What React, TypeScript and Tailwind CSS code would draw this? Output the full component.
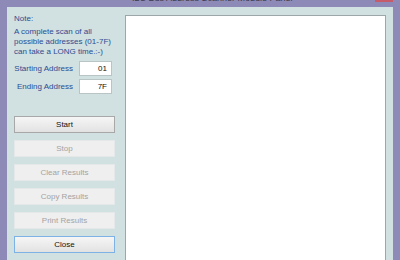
const font = { fontFamily: '"Liberation Sans", Arial, sans-serif' };

function ActionButton({ label, disabled, focused }: { label: string; disabled?: boolean; focused?: boolean }) {
  if (disabled) {
    return (
      <div className="w-[101px] h-[17px] flex items-center justify-center border border-[#E4E8E8] bg-[#EFEFEF] text-[8px] text-[#A3A3A3]">
        {label}
      </div>
    );
  }
  return (
    <div
      className={`w-[101px] h-[17px] flex items-center justify-center border bg-gradient-to-b from-[#F6F6F6] to-[#E2E2E2] text-[8px] text-[#111]  ${
        focused ? "border-[#7DB2E6]" : "border-[#A8A8A8]"
      }`}
    >
      {label}
    </div>
  );
}

export default function App() {
  return (
    <div className="w-[400px] h-[260px] overflow-hidden bg-[#8D8AB7] flex flex-col" style={font}>
      {/* Title bar (mostly cut off) */}
      <div className="h-[7px] flex overflow-hidden shrink-0">
        <div className="pl-[132px] -mt-[7px] text-[9px] leading-[10px] text-[#3A3A4A] whitespace-nowrap">
          I2C Bus Address Scanner Module Panel
        </div>
        <div className="ml-auto mr-[7px] w-[18px] h-[2px] bg-[#C65B6A]" />
      </div>

      {/* Window body */}
      <div className="flex-1 mx-[7px] bg-[#D1E0E0] flex min-h-0">
        {/* Left controls */}
        <div className="w-[118px] shrink-0 pl-[7px] pt-[7px] flex flex-col text-[8px]">
          <div className="leading-[10px] text-[#2B4D93]">Note:</div>
          <div className="mt-[3px] leading-[10px] text-[#2B4D93]">
            <div>A complete scan of all</div>
            <div>possible addresses (01-7F)</div>
            <div>can take a LONG time.:-)</div>
          </div>

          <div className="mt-[4px] flex items-center h-[15px]">
            <div className="w-[59px] text-right whitespace-nowrap text-[#2B4D93]">Starting Address</div>
            <div className="ml-[6px] w-[33px] h-[15px] bg-white border border-[#B9C4C4] flex items-center justify-end pr-[4px] text-[#111]">
              01
            </div>
          </div>
          <div className="mt-[3px] flex items-center h-[15px]">
            <div className="w-[59px] text-right whitespace-nowrap text-[#2B4D93]">Ending Address</div>
            <div className="ml-[6px] w-[33px] h-[15px] bg-white border border-[#B9C4C4] flex items-center justify-end pr-[4px] text-[#111]">
              7F
            </div>
          </div>

          <div className="mt-[22px] flex flex-col gap-[7px]">
            <ActionButton label="Start" />
            <ActionButton label="Stop" disabled />
            <ActionButton label="Clear Results" disabled />
            <ActionButton label="Copy Results" disabled />
            <ActionButton label="Print Results" disabled />
            <ActionButton label="Close" focused />
          </div>
        </div>

        {/* Results area */}
        <div className="flex-1 mt-[8px] mr-[7px] bg-white border border-[#9CA8A8] border-b-0" />
      </div>
    </div>
  );
}
